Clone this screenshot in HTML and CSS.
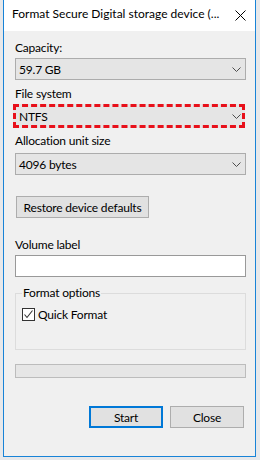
FILE: index.html
```html
<!DOCTYPE html>
<html>
  <head>
    <title>Format</title>
    <link rel="stylesheet" href="styles.css">
  </head>
  <body>
    <div class="window">
      <div class="titlebar">
        <span class="title">Format Secure Digital storage device (...</span>
        <svg class="close-icon" width="11" height="11" viewBox="0 0 11 11">
          <path d="M0.5 0.5L10.5 10.5M10.5 0.5L0.5 10.5" stroke="#000" stroke-width="1" fill="none"></path>
        </svg>
      </div>

      <div class="content">
        <div class="label">Capacity:</div>
        <div class="combo">
          <span>59.7 GB</span>
          <svg class="chevron" width="9" height="5" viewBox="0 0 9 5">
            <path d="M0.5 0.5L4.5 4.5L8.5 0.5" stroke="#4d4d4d" fill="none"></path>
          </svg>
        </div>

        <div class="label label-fs">File system</div>
        <div class="combo combo-marked">
          <span>NTFS</span>
          <svg class="chevron" width="9" height="5" viewBox="0 0 9 5">
            <path d="M0.5 0.5L4.5 4.5L8.5 0.5" stroke="#4d4d4d" fill="none"></path>
          </svg>
        </div>

        <div class="label label-alloc">Allocation unit size</div>
        <div class="combo combo-alloc">
          <span>4096 bytes</span>
          <svg class="chevron" width="9" height="5" viewBox="0 0 9 5">
            <path d="M0.5 0.5L4.5 4.5L8.5 0.5" stroke="#4d4d4d" fill="none"></path>
          </svg>
        </div>

        <button class="btn restore-btn">Restore device defaults</button>

        <div class="label label-volume">Volume label</div>
        <div class="textbox"></div>

        <fieldset class="options">
          <legend>Format options</legend>
          <div class="check-row">
            <span class="checkbox">
              <svg width="11" height="11" viewBox="0 0 11 11">
                <path d="M1.5 5.5L4 8.5L9.5 1.5" stroke="#333" stroke-width="1.1" fill="none"></path>
              </svg>
            </span>
            <span>Quick Format</span>
          </div>
        </fieldset>

        <div class="progress"></div>

        <div class="actions">
          <button class="btn start-btn">Start</button>
          <button class="btn">Close</button>
        </div>
      </div>
    </div>
  </body>
</html>
```

FILE: styles.css
```css
body {
  margin: 0;
  background-color: #e7e8ea;
  font-family: Lato, "Noto Sans", sans-serif;
  font-size: 12px;
  letter-spacing: -0.2px;
  color: #000;
}
.window {
  margin-left: 3px;
  width: 253px;
  height: 457px;
  box-sizing: border-box;
  border: 1px solid #1883d7;
  border-top: none;
  background-color: #f0f0f0;
  display: flex;
  flex-direction: column;
}
.titlebar {
  height: 31px;
  box-sizing: border-box;
  background-color: #ffffff;
  display: flex;
  justify-content: space-between;
  align-items: flex-start;
  padding: 6px 9px 0 8px;
  line-height: 16px;
}
.title {
  letter-spacing: 0;
}
.close-icon {
  margin-top: 4px;
}
.content {
  display: flex;
  flex-direction: column;
  padding: 9px 9px 0 11px;
}
.label {
  line-height: 16px;
  height: 16px;
}
.label-fs {
  margin-top: 6px;
}
.label-alloc {
  margin-top: 5px;
}
.label-volume {
  margin-top: 19px;
}
.combo {
  margin-top: 2px;
  height: 22px;
  box-sizing: border-box;
  border: 1px solid #acacac;
  background-color: #e5e5e5;
  display: flex;
  justify-content: space-between;
  align-items: center;
  padding: 1px 4px 0 3px;
  line-height: 16px;
}
.combo-marked {
  height: 24px;
  width: 232px;
  margin-left: -2px;
  border: 3px dashed #e8101a;
  padding: 1px 1px 0 3px;
}
.combo-alloc {
  margin-top: 4px;
}
.btn {
  height: 22px;
  box-sizing: border-box;
  border: 1px solid #adadad;
  background-color: #e1e1e1;
  font-family: inherit;
  font-size: 12px;
  letter-spacing: -0.2px;
  color: #000;
  padding: 1px 0 0 0;
  width: 74px;
}
.restore-btn {
  margin-top: 21px;
  margin-left: 1px;
  width: 133px;
}
.textbox {
  margin-top: 2px;
  height: 22px;
  box-sizing: border-box;
  border: 1px solid #999999;
  background-color: #ffffff;
}
.options {
  margin: 8px 0 0 0;
  padding: 0 6px 28px 6px;
  border: 1px solid #dcdcdc;
  line-height: 16px;
}
.options legend {
  padding: 0 1px;
  line-height: 16px;
}
.check-row {
  margin-top: 7px;
  height: 13px;
  display: flex;
  align-items: center;
  gap: 3px;
}
.checkbox {
  width: 13px;
  height: 13px;
  box-sizing: border-box;
  border: 1px solid #333333;
  background-color: #ffffff;
  display: flex;
}
.progress {
  margin-top: 14px;
  height: 14px;
  box-sizing: border-box;
  border: 1px solid #bcbcbc;
  background-color: #e6e6e6;
}
.actions {
  margin-top: 28px;
  display: flex;
  justify-content: flex-end;
  gap: 7px;
  padding-right: 2px;
}
.start-btn {
  border: 2px solid #0078d7;
}
```
